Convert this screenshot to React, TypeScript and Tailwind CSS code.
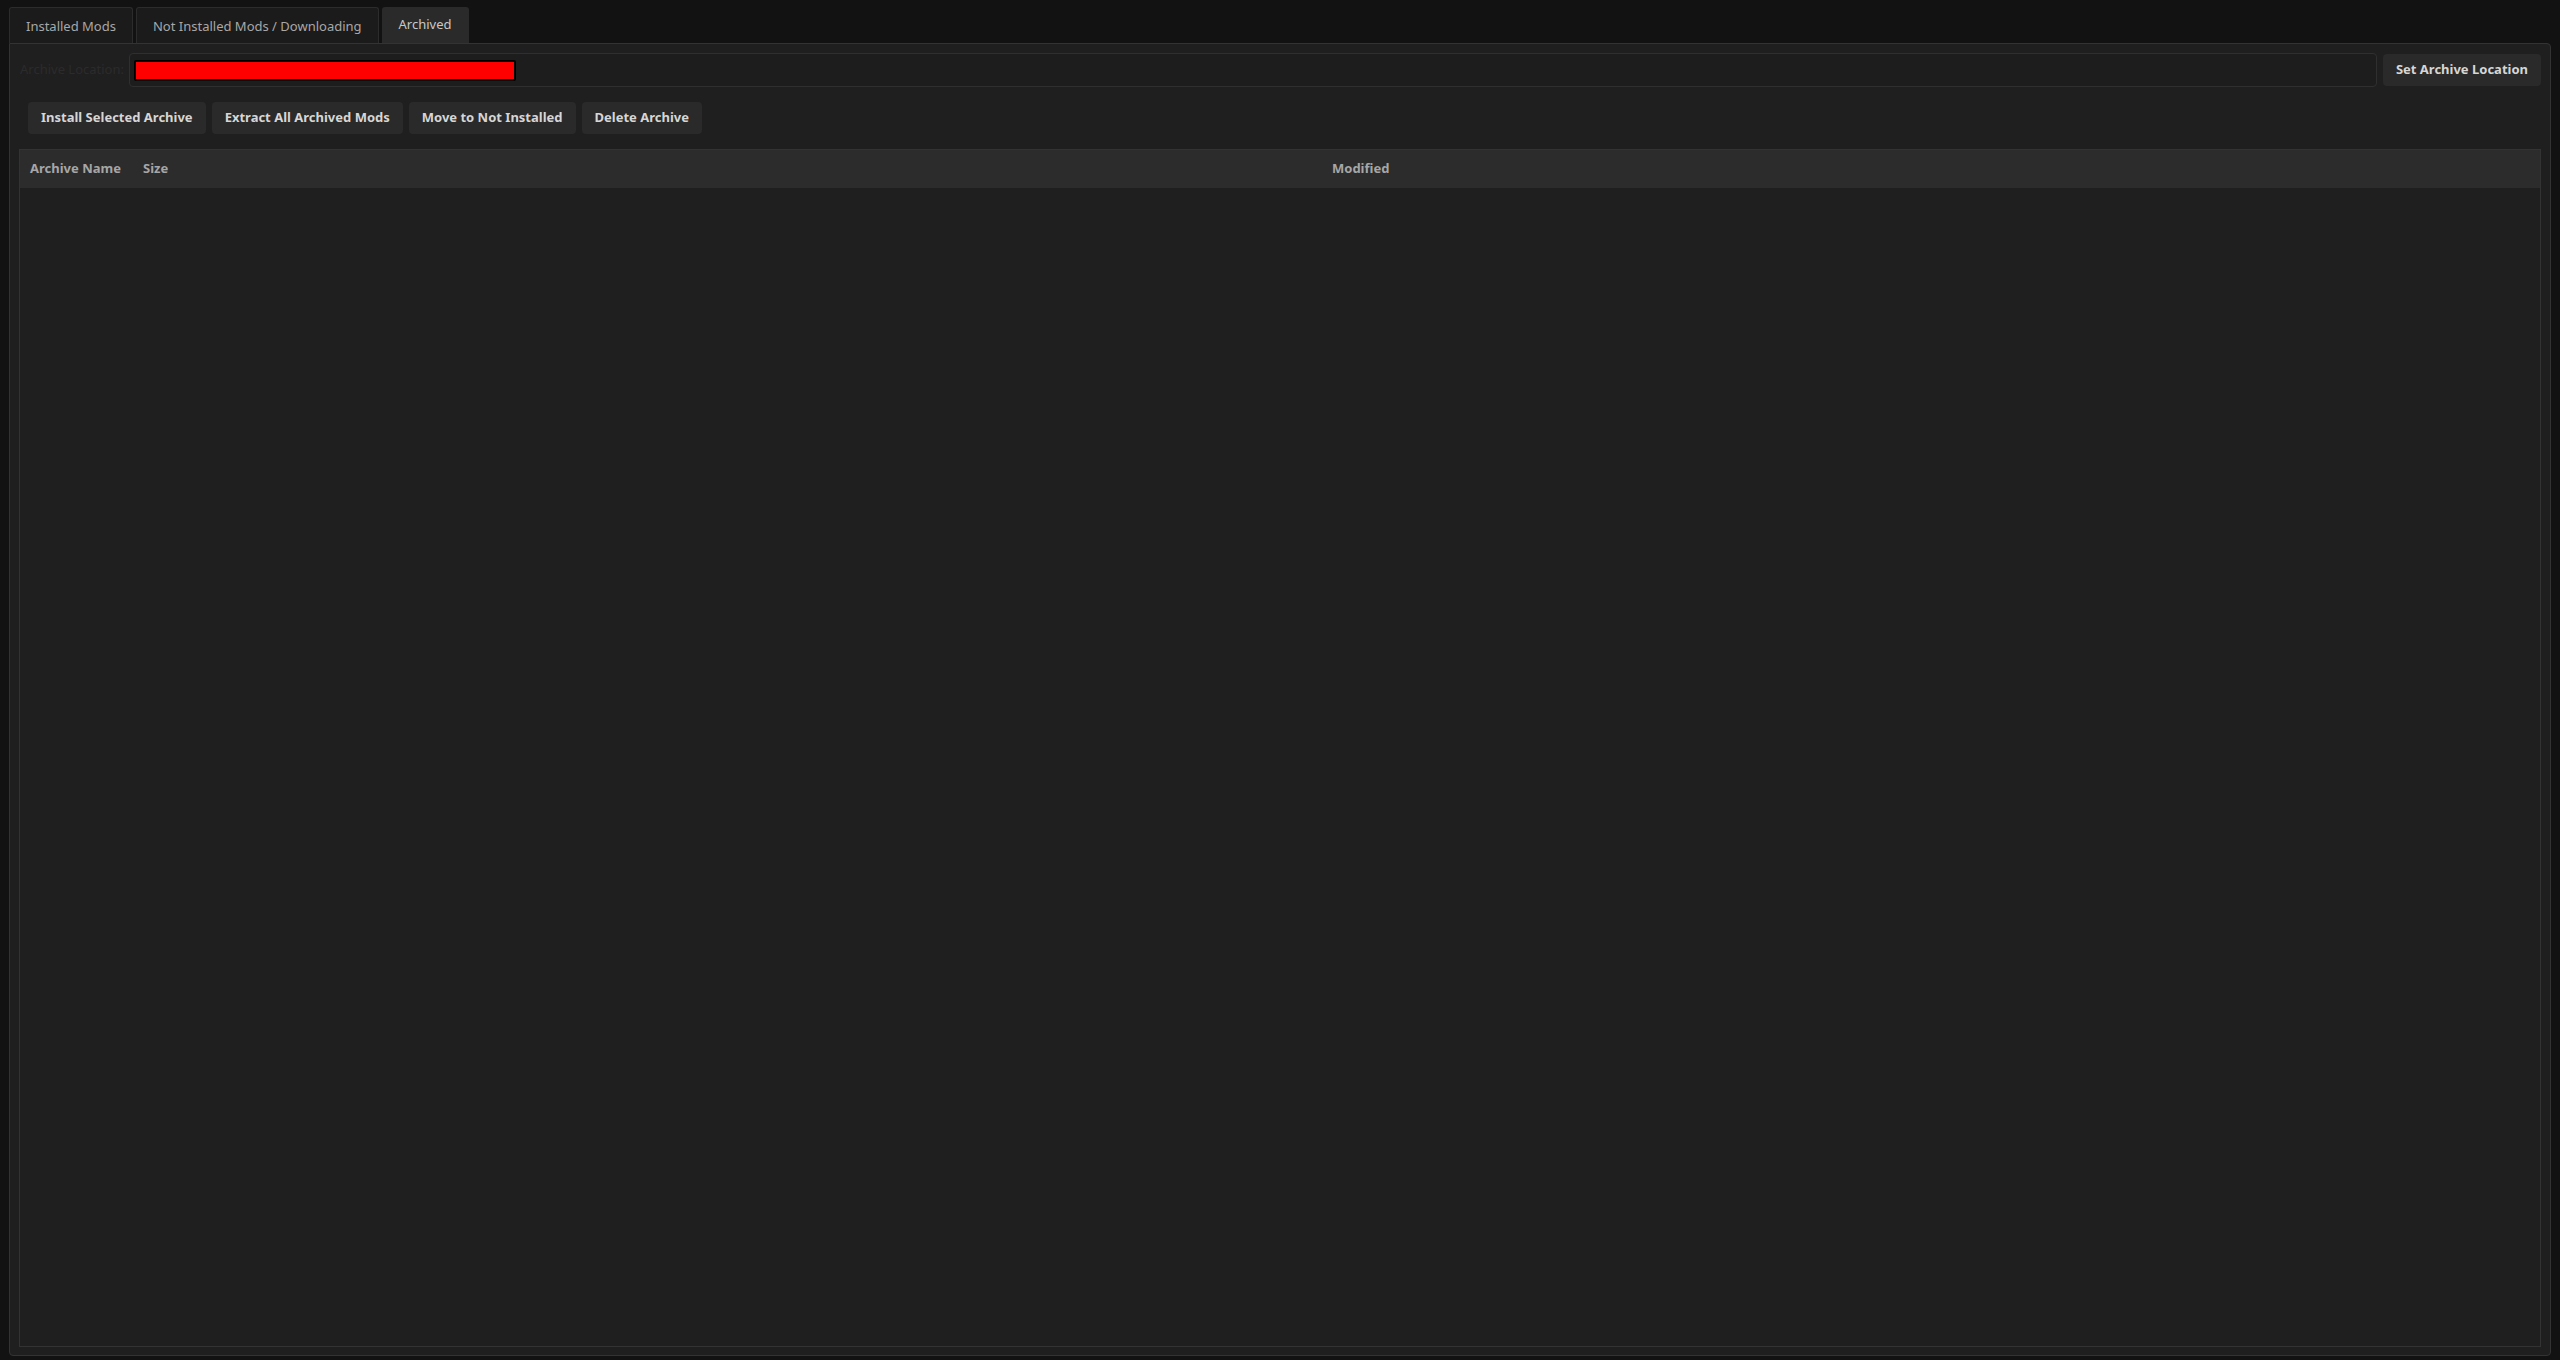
const tabs = [
  { label: "Installed Mods", active: false },
  { label: "Not Installed Mods / Downloading", active: false },
  { label: "Archived", active: true },
]

const actions = [
  "Install Selected Archive",
  "Extract All Archived Mods",
  "Move to Not Installed",
  "Delete Archive",
]

const App = () => {
  return (
    <div className="w-full h-[1360px] bg-[#121212] pt-[7px] px-[9px] pb-[4px] flex flex-col text-[13px] [font-family:'Noto_Sans',sans-serif]">
      {/* tab bar */}
      <div className="flex gap-[3px] h-[36px] shrink-0">
        {tabs.map((tab) => (
          <div
            key={tab.label}
            className={
              tab.active
                ? "px-[17px] flex items-center justify-center rounded-t-[3px] bg-[#2a2a2a] text-[#c8c8c8] whitespace-nowrap"
                : "px-[16px] pt-[2px] flex items-center justify-center rounded-t-[3px] bg-[#1b1b1b] border border-b-0 border-[#2c2c2c] text-[#a8a8a8] whitespace-nowrap"
            }
          >
            {tab.label}
          </div>
        ))}
      </div>

      {/* panel */}
      <div className="flex-1 flex flex-col border border-[#333333] rounded-[4px] rounded-tl-none bg-[#1f1f1f] pt-[9px] px-[9px] pb-[8px] min-h-0">
        <div className="flex items-center h-[34px] gap-[6px]">
          <span className="w-[104px] shrink-0 pl-[1px] text-[#2b2b2b] whitespace-nowrap">Archive Location:</span>
          <div className="flex-1 h-full flex items-center px-[4px] rounded-[4px] border border-[#2f2f2f] bg-[#1d1d1d]">
            <div className="w-[382px] h-[21px] bg-[#ff0000] border-2 border-[#000000] rounded-[2px]" />
          </div>
          <button className="h-[32px] px-[13px] rounded-[4px] bg-[#2a2a2a] text-[#d6d6d6] font-bold whitespace-nowrap">
            Set Archive Location
          </button>
        </div>

        <div className="flex gap-[6px] pl-[9px] mt-[15px]">
          {actions.map((label) => (
            <button
              key={label}
              className="h-[32px] px-[13px] rounded-[4px] bg-[#2a2a2a] text-[#d6d6d6] font-bold whitespace-nowrap"
            >
              {label}
            </button>
          ))}
        </div>

        <div className="flex-1 mt-[15px] flex flex-col border border-[#333333] bg-[#1f1f1f] min-h-0">
          <div className="h-[38px] bg-[#2c2c2c] flex items-center text-[#a6a6a6] font-bold">
            <div className="w-[113px] pl-[10px] whitespace-nowrap">Archive Name</div>
            <div className="w-[1189px] pl-[10px]">Size</div>
            <div className="pl-[10px]">Modified</div>
          </div>
          <div className="flex-1" />
        </div>
      </div>
    </div>
  )
}

export default App
